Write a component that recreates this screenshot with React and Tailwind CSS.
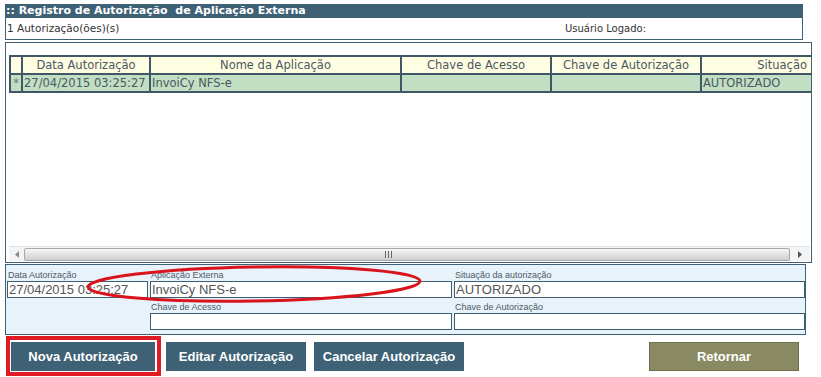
import React from 'react';

const gridFont = { fontFamily: '"DejaVu Sans", Verdana, sans-serif' };

const columns = [
  { key: 'sel', label: '', w: 'w-[12px]' },
  { key: 'data', label: 'Data Autorização', w: 'w-[128px]' },
  { key: 'nome', label: 'Nome da Aplicação', w: 'w-[251px]' },
  { key: 'acesso', label: 'Chave de Acesso', w: 'w-[150px]' },
  { key: 'autoriz', label: 'Chave de Autorização', w: 'w-[150px]' },
  { key: 'situacao', label: 'Situação', w: 'w-[110px]' },
];

const row = {
  sel: '*',
  data: '27/04/2015 03:25:27',
  nome: 'InvoiCy NFS-e',
  acesso: '',
  autoriz: '',
  situacao: 'AUTORIZADO',
};

const Field = ({ label, value, className }) => (
  <div className={`flex flex-col ${className}`}>
    <span className="h-[11px] text-[9px] leading-[11px] text-[#4b5a66] pl-[1px] font-['Liberation_Sans',Arial,sans-serif]">{label}</span>
    <div className="h-[17px] border border-[#3e5f72] bg-white text-[13px] leading-[15px] text-[#555] pl-[1px] font-['Liberation_Sans',Arial,sans-serif]">
      {value}
    </div>
  </div>
);

const Scrollbar = () => (
  <div className="flex h-[15px] items-center bg-[#f4f4f4] border-t border-[#e2e2e2]">
    <div className="w-[15px] flex justify-center text-[#888]">
      <svg width="4" height="7" viewBox="0 0 4 7"><path d="M4 0 L0 3.5 L4 7 Z" fill="#8a8a8a" /></svg>
    </div>
    <div className="flex-1 h-[13px] rounded-[2px] border border-[#a9a9a9] bg-gradient-to-b from-[#f6f6f6] via-[#e2e2e2] to-[#cfcfcf] flex items-center justify-center">
      <div className="flex gap-[2px] mr-[38px]">
        <span className="w-[1px] h-[7px] bg-[#666]" />
        <span className="w-[1px] h-[7px] bg-[#666]" />
        <span className="w-[1px] h-[7px] bg-[#666]" />
      </div>
    </div>
    <div className="w-[20px] flex justify-center">
      <svg width="4" height="7" viewBox="0 0 4 7"><path d="M0 0 L4 3.5 L0 7 Z" fill="#555" /></svg>
    </div>
  </div>
);

export default function App() {
  return (
    <div className="relative w-[821px] h-[377px] bg-white overflow-hidden pt-[4px] pl-[5px]" style={gridFont}>
      {/* title bar */}
      <div className="w-[798px] h-[14px] bg-[#3e6175] text-white font-bold text-[11px] leading-[14px] pl-[1px]">
        :: Registro de Autorização&nbsp; de Aplicação Externa
      </div>
      <div className="w-[798px] h-[22px] border-l border-r border-b border-[#3e6175] flex items-center text-[#333] pl-[1px]">
        <span className="w-[558px] text-[10.5px]">1 Autorização(ões)(s)</span>
        <span className="text-[10px]">Usuário Logado:</span>
      </div>

      {/* grid */}
      <div className="mt-[2px] w-[807px] h-[221px] border border-[#3e6175] flex flex-col pt-[12px] pl-[3px]">
        <table className="border-collapse table-fixed text-[11.5px] text-[#4a5863]">
          <thead>
            <tr className="h-[18px] bg-[#fffee2]">
              {columns.map((c) => (
                <th
                  key={c.key}
                  className={`${c.w} border-2 border-[#3e5868] font-normal p-0 leading-[14px] ${c.key === 'situacao' ? 'text-right pr-[4px] border-r-0' : 'text-center'}`}
                >
                  {c.label}
                </th>
              ))}
            </tr>
          </thead>
          <tbody>
            <tr className="h-[18px] bg-[#c2dec3]">
              {columns.map((c) => (
                <td
                  key={c.key}
                  className={`${c.w} border-2 border-[#3e5868] p-0 leading-[14px] whitespace-nowrap ${c.key === 'sel' ? 'text-center text-[#777]' : 'pl-[1px]'} ${c.key === 'situacao' ? 'border-r-0' : ''}`}
                >
                  {row[c.key]}
                </td>
              ))}
            </tr>
          </tbody>
        </table>
        <div className="flex-1" />
        <div className="mb-[1px] mr-[1px]">
          <Scrollbar />
        </div>
      </div>

      {/* detail form */}
      <div className="mt-[1px] w-[801px] h-[71px] border border-[#3e6175] bg-[#e8f2fb] px-[1px] pt-[5px] grid grid-cols-[141px_302px_351px] gap-x-[2px] gap-y-[0px]">
        <Field label="Data Autorização" value="27/04/2015 03:25:27" />
        <Field label="Aplicação Externa" value="InvoiCy NFS-e" />
        <Field label="Situação da autorização" value="AUTORIZADO" />
        <div />
        <Field label="Chave de Acesso" value="" />
        <Field label="Chave de Autorização" value="" />
      </div>

      {/* buttons */}
      <div className="mt-[7px] flex items-center pl-[6px] font-['Liberation_Sans',Arial,sans-serif] font-bold text-[13px] text-white">
        <button className="w-[144px] h-[29px] bg-[#3e6175]">Nova Autorização</button>
        <button className="ml-[11px] w-[140px] h-[29px] bg-[#3e6175]">Editar Autorização</button>
        <button className="ml-[8px] w-[150px] h-[29px] bg-[#3e6175]">Cancelar Autorização</button>
        <button className="ml-[185px] w-[150px] h-[29px] bg-[#8a8a62] border border-[#6e6e4c]">Retornar</button>
      </div>

      {/* annotations */}
      <div className="absolute left-[6px] top-[336px] w-[155px] h-[40px] border-[4px] border-[#e01b24] pointer-events-none" />
      <svg className="absolute left-0 top-0 pointer-events-none" width="821" height="377">
        <ellipse cx="254" cy="284" rx="166" ry="17" fill="none" stroke="#d9141c" strokeWidth="3" transform="rotate(-1 254 284)" />
      </svg>
    </div>
  );
}
